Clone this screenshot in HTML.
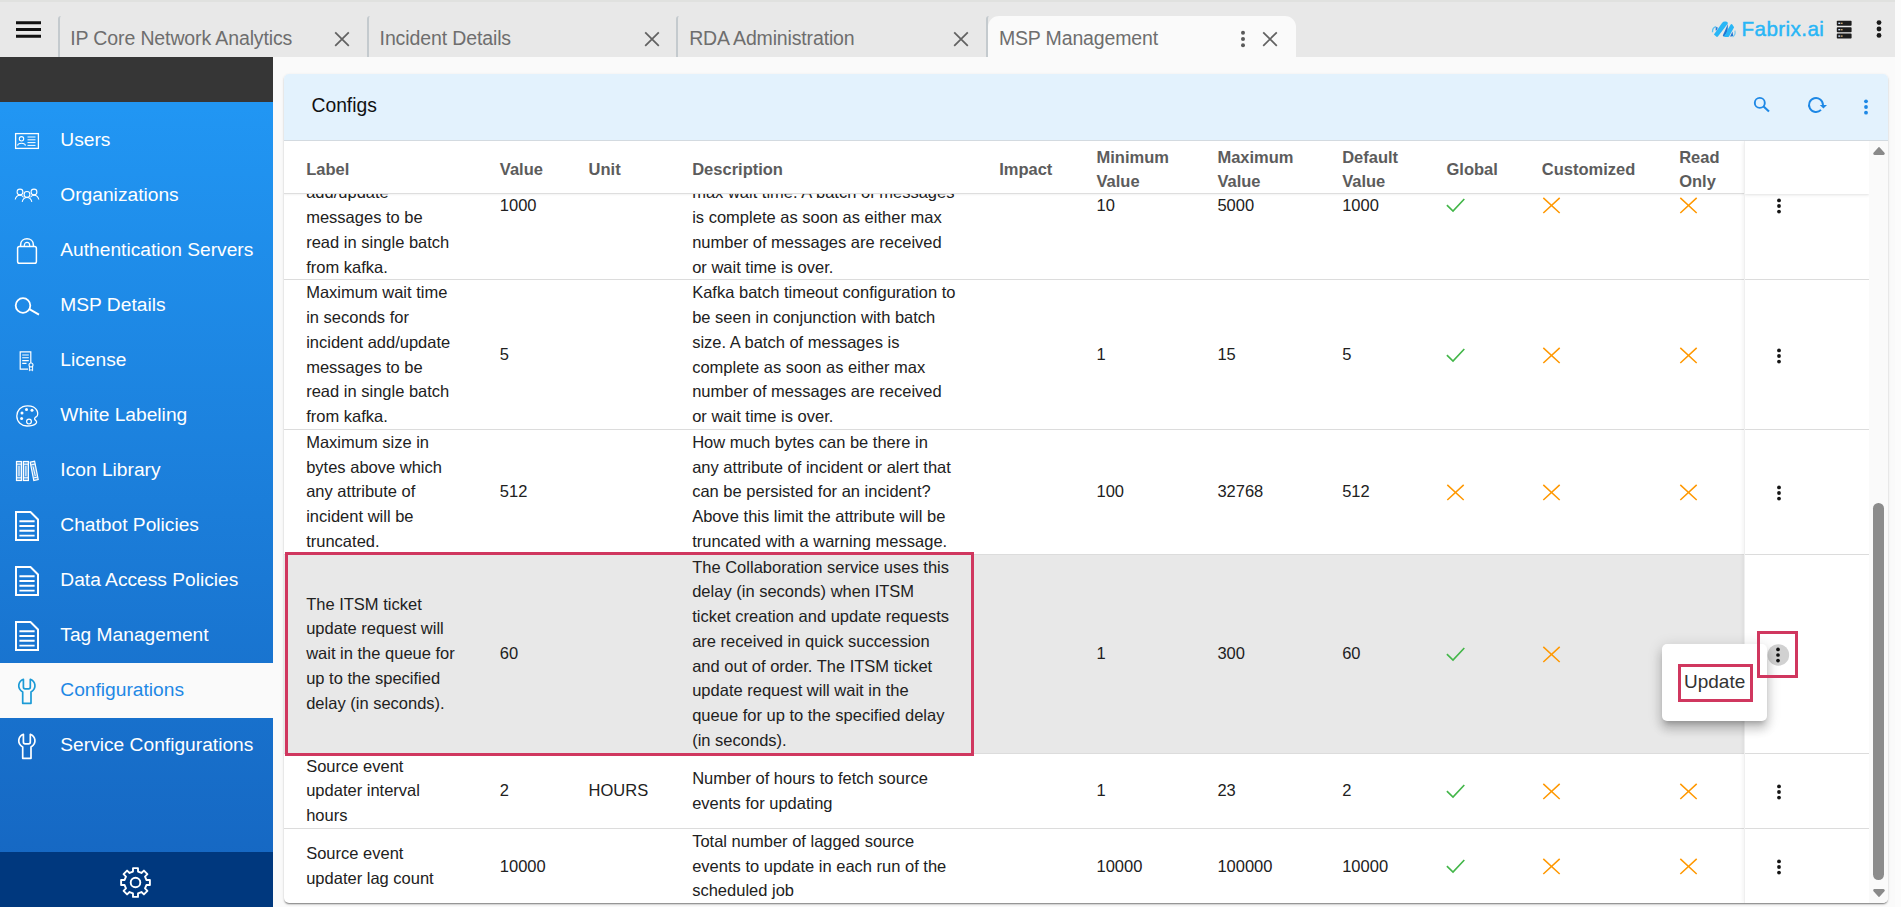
<!DOCTYPE html><html><head><meta charset="utf-8"><title>MSP Management</title><style>
*{box-sizing:border-box;margin:0;padding:0}
html,body{width:1901px;height:907px;overflow:hidden;background:#fafafa;font-family:"Liberation Sans",sans-serif;}
.abs{position:absolute}
#topbar{position:absolute;left:0;top:0;width:1895px;height:57px;background:#e8e8e8}
#topstrip{position:absolute;left:0;top:0;width:1895px;height:2px;background:#e0e1df}
#rstrip{position:absolute;left:1895px;top:0;width:6px;height:907px;background:#fcfcfc}
.tabsep{position:absolute;top:16px;width:12px;height:41px;border-left:2px solid #c4cace;border-top-left-radius:3px}
.tabtxt{position:absolute;top:26px;height:24px;line-height:24px;font-size:19.5px;color:#6e6e6e;white-space:nowrap}
#acttab{position:absolute;left:987.6px;top:16px;width:308px;height:42px;background:#fafafa;border-radius:11px 11px 0 0}
#sidebar{position:absolute;left:0;top:57px;width:273px;height:850px;background:linear-gradient(#2196f3 0%,#2196f3 6%,#1565c0 100%)}
#sbdark{position:absolute;left:0;top:0;width:273px;height:45px;background:#363636}
#sbfoot{position:absolute;left:0;top:795px;width:273px;height:55px;background:#00387e}
.sbi{position:absolute;left:60.3px;height:24px;line-height:24px;font-size:19.2px;color:#fff;white-space:nowrap}
#sbact{position:absolute;left:0;top:606px;width:273px;height:55px;background:#fafafa}
#card{position:absolute;left:284px;top:74px;width:1604px;height:829px;background:#fff;border-radius:5px;box-shadow:0 2px 2px -1px rgba(0,0,0,.34),0 1px 1px 0 rgba(0,0,0,.14),0 1px 3px 0 rgba(0,0,0,.12);overflow:hidden}
#chead{position:absolute;left:0;top:0;width:1604px;height:67px;background:#e3f2fd;border-bottom:1px solid #d3dae0}
#ctitle{position:absolute;left:27.5px;top:20px;font-size:19.3px;line-height:24px;color:#111;white-space:nowrap}
#tbl{position:absolute;left:0;top:0;width:1585px;height:829px;font-size:16.5px;line-height:24.75px;color:#212121}
.row{position:absolute;left:0;width:1585px;border-bottom:1px solid #dcdcdc}
.c{position:absolute;white-space:nowrap}
#thead{position:absolute;left:0;top:66.5px;width:1585px;height:53px;background:#fff;border-bottom:1px solid #dedede;box-shadow:0 1px 1.5px rgba(0,0,0,.05);font-weight:700;color:#5c5c5c;font-size:16.5px;line-height:24.75px}
#actcol{position:absolute;left:1460.6px;top:66.5px;width:124.4px;height:763px;background:transparent;box-shadow:-1px 0 0 0 #efefef,-3px 0 4px -1px rgba(0,0,0,.06)}
.ac{position:absolute;left:1460.6px;top:0;width:124.4px;height:100%;background:#fff}
#sbar{position:absolute;left:1585px;top:66.5px;width:19px;height:763px;background:#fafafa}
</style></head><body>
<div id="topbar"></div><div id="topstrip"></div><div id="rstrip"></div>
<svg class="abs" style="left:15px;top:20px" width="28" height="20" viewBox="0 0 28 20"><path d="M1 2.8H26M1 9.5H26M1 16.3H26" stroke="#111" stroke-width="2.9"/></svg>
<div id="acttab"></div>
<div class="tabsep" style="left:58.3px"></div>
<div class="tabsep" style="left:366.8px"></div>
<div class="tabsep" style="left:675.9px"></div>
<div class="tabsep" style="left:985.6px"></div>
<div class="tabtxt" style="left:70.2px;letter-spacing:-0.12px">IP Core Network Analytics</div>
<div class="tabtxt" style="left:379.6px;letter-spacing:-0.12px">Incident Details</div>
<div class="tabtxt" style="left:689.2px;letter-spacing:-0.15px">RDA Administration</div>
<div class="tabtxt" style="left:998.9px;letter-spacing:-0.15px">MSP Management</div>
<svg class="abs" style="left:333.4px;top:30px" width="18" height="18" viewBox="0 0 18 18"><path d="M2.2 2.4 L15.8 15.8 M15.8 2.4 L2.2 15.8" stroke="#626262" stroke-width="1.75" fill="none"/></svg>
<svg class="abs" style="left:642.6px;top:30px" width="18" height="18" viewBox="0 0 18 18"><path d="M2.2 2.4 L15.8 15.8 M15.8 2.4 L2.2 15.8" stroke="#626262" stroke-width="1.75" fill="none"/></svg>
<svg class="abs" style="left:952.2px;top:30px" width="18" height="18" viewBox="0 0 18 18"><path d="M2.2 2.4 L15.8 15.8 M15.8 2.4 L2.2 15.8" stroke="#626262" stroke-width="1.75" fill="none"/></svg>
<svg class="abs" style="left:1261.4px;top:30px" width="18" height="18" viewBox="0 0 18 18"><path d="M2.2 2.4 L15.8 15.8 M15.8 2.4 L2.2 15.8" stroke="#626262" stroke-width="1.75" fill="none"/></svg>
<svg class="abs" style="left:1238.8px;top:28.700000000000003px" width="8" height="20" viewBox="0 0 8 20"><circle cx="4" cy="3.7" r="2.0" fill="#5a5a5a"/><circle cx="4" cy="10" r="2.0" fill="#5a5a5a"/><circle cx="4" cy="16.3" r="2.0" fill="#5a5a5a"/></svg>
<svg class="abs" style="left:1705px;top:14px" width="40" height="30" viewBox="0 0 40 30"><path d="M7.5 18.2 Q7.3 13.6 11.2 12.7" stroke="#29b6f6" stroke-width="1.3" fill="none" opacity=".75"/><path d="M10.8 12.9 L12.9 13.4 L11.6 16.4 L10.6 16.6 Z" fill="#2a78d4"/><path d="M8.9 20.5 L17 8.9 Q18.4 7.3 20.6 7.6 Q23.4 8.1 22.7 9.8 L12.9 22.5 Q12 23.2 11.2 22.6 Z" fill="#29b6f6"/><path d="M22.9 9.9 L17.8 21.6 Q18.1 22.8 19.4 22.4 L22.6 17.4 Z" fill="#2176d2"/><path d="M18.9 22.4 Q21.6 19.4 22.7 15.6 L25.5 10.8 Q26.4 9.5 27.3 10.6 L29.1 13.3 L23.9 22.7 Q21 23.5 18.9 22.4 Z" fill="#29b6f6"/><path d="M27.5 17.6 L25.1 22.4 Q26.8 22.9 28.1 21.8 Z" fill="#2176d2"/><path d="M29.9 16.6 Q30.9 20.6 27.6 23" stroke="#29b6f6" stroke-width="1.2" fill="none" opacity=".6"/></svg>
<div class="abs" style="left:1741.6px;top:17.4px;font-size:20.6px;line-height:24px;color:#29b6f6;letter-spacing:.42px;white-space:nowrap;-webkit-text-stroke:.45px #29b6f6">Fabrix.ai</div>
<svg class="abs" style="left:1836px;top:20px" width="17" height="20" viewBox="0 0 17 20"><rect x="0.8" y="0.8" width="14.8" height="5" rx="0.8" fill="#1d1d1d"/><rect x="0.8" y="7.2" width="14.8" height="5" rx="0.8" fill="#1d1d1d"/><rect x="0.8" y="13.6" width="14.8" height="5" rx="0.8" fill="#1d1d1d"/><rect x="2.3" y="2.6" width="2" height="1.4" fill="#cfe3ff"/><rect x="5" y="2.6" width="1.6" height="1.4" fill="#c9a36a"/><rect x="2.3" y="9" width="2" height="1.4" fill="#cfe3ff"/><rect x="5" y="9" width="1.6" height="1.4" fill="#c9a36a"/><rect x="2.3" y="15.4" width="2" height="1.4" fill="#cfe3ff"/><rect x="5" y="15.4" width="1.6" height="1.4" fill="#c9a36a"/></svg>
<svg class="abs" style="left:1874.6px;top:18.6px" width="8" height="20" viewBox="0 0 8 20"><circle cx="4" cy="3.5999999999999996" r="2.4" fill="#1a1a1a"/><circle cx="4" cy="10" r="2.4" fill="#1a1a1a"/><circle cx="4" cy="16.4" r="2.4" fill="#1a1a1a"/></svg>
<div id="sidebar"><div id="sbdark"></div><div id="sbact"></div><div id="sbfoot"></div></div>
<div class="sbi" style="top:127.6px;color:#fff">Users</div>
<div class="sbi" style="top:182.6px;color:#fff">Organizations</div>
<div class="sbi" style="top:237.6px;color:#fff">Authentication Servers</div>
<div class="sbi" style="top:292.6px;color:#fff">MSP Details</div>
<div class="sbi" style="top:347.6px;color:#fff">License</div>
<div class="sbi" style="top:402.6px;color:#fff">White Labeling</div>
<div class="sbi" style="top:457.6px;color:#fff">Icon Library</div>
<div class="sbi" style="top:512.6px;color:#fff">Chatbot Policies</div>
<div class="sbi" style="top:567.6px;color:#fff">Data Access Policies</div>
<div class="sbi" style="top:622.6px;color:#fff">Tag Management</div>
<div class="sbi" style="top:677.6px;color:#1e88e5">Configurations</div>
<div class="sbi" style="top:732.6px;color:#fff">Service Configurations</div>
<svg class="abs" style="left:14px;top:132px" width="26" height="18" viewBox="0 0 26 18"><rect x="1.6" y="1.6" width="22.8" height="14.8" stroke="#fff" fill="none" stroke-width="1.3"/><circle cx="7.5" cy="6.8" r="2.2" stroke="#fff" fill="none" stroke-width="1.1"/><path d="M3.6 13.6 C4 10.4 11 10.4 11.4 13.6" stroke="#fff" fill="none" stroke-width="1.1"/><path d="M13.5 5H21.5M13.5 7.8H21.5M13.5 10.6H21.5M13.5 13.4H21.5" stroke="#fff" fill="none" stroke-width="1"/></svg>
<svg class="abs" style="left:14px;top:187px" width="26" height="16" viewBox="0 0 26 16"><circle cx="6" cy="5" r="2.9" stroke="#fff" fill="none" stroke-width="1.1"/><path d="M1.2 12.5 C2 8.6 4 8.2 6 8.2 C8 8.2 9 9 9.6 10.4" stroke="#fff" fill="none" stroke-width="1.1"/><circle cx="20" cy="5" r="2.9" stroke="#fff" fill="none" stroke-width="1.1"/><path d="M24.8 12.5 C24 8.6 22 8.2 20 8.2 C18 8.2 17 9 16.4 10.4" stroke="#fff" fill="none" stroke-width="1.1"/><circle cx="13" cy="7.4" r="2.9" stroke="#fff" fill="none" stroke-width="1.1"/><path d="M8.2 14.8 C9 10.8 11 10.5 13 10.5 C15 10.5 17 10.8 17.8 14.8" stroke="#fff" fill="none" stroke-width="1.1"/></svg>
<svg class="abs" style="left:15px;top:237px" width="24" height="28" viewBox="0 0 24 28"><rect x="2.6" y="9.6" width="18.8" height="16.6" rx="1.8" stroke="#fff" fill="none" stroke-width="1.5"/><path d="M5.6 9.6 V8 C5.6 -0.2 18.4 -0.2 18.4 8 V9.6" stroke="#fff" fill="none" stroke-width="1.5"/><path d="M9.3 9.6 V8.4 C9.3 4.4 14.7 4.4 14.7 8.4 V9.6" stroke="#fff" fill="none" stroke-width="1.2"/></svg>
<svg class="abs" style="left:14px;top:296px" width="27" height="21" viewBox="0 0 27 21"><circle cx="9" cy="9.5" r="7.3" stroke="#fff" fill="none" stroke-width="1.8"/><path d="M15.3 13.2 L25 18.6" stroke="#fff" fill="none" stroke-width="1.9"/></svg>
<svg class="abs" style="left:19px;top:350px" width="16" height="22" viewBox="0 0 16 22"><path d="M11.8 13 V1.8 H1.2 V19.2 H9" stroke="#fff" fill="none" stroke-width="1.2"/><path d="M3.2 5H9.8M3.2 7.8H9.8M3.2 10.6H9.8M3.2 13.4H7.5" stroke="#fff" fill="none" stroke-width="1.1"/><circle cx="12" cy="15" r="2" stroke="#fff" fill="none" stroke-width="1.1"/><path d="M10.4 16.6 V20.8 L12 19.6 L13.6 20.8 V16.6" stroke="#fff" fill="none" stroke-width="1"/></svg>
<svg class="abs" style="left:15px;top:404px" width="25" height="24" viewBox="0 0 25 24"><path d="M12.5 1.8 C5.5 1.8 1.8 7 1.8 12 C1.8 18 6.5 22 12 22 C16.5 22 19.5 21 21 19.5 C22.5 18 21 16.8 20 15.8 C19 14.6 20 13.4 21.5 12.6 C24 11 23.4 1.8 12.5 1.8 Z" stroke="#fff" fill="none" stroke-width="1.3"/><circle cx="7" cy="9" r="1.5" fill="#fff"/><circle cx="11.5" cy="5.6" r="1.5" fill="#fff"/><circle cx="17" cy="6.2" r="1.5" fill="#fff"/><circle cx="6.6" cy="14.6" r="1.5" fill="#fff"/><circle cx="14" cy="17.6" r="2.4" stroke="#fff" fill="none" stroke-width="1.2"/></svg>
<svg class="abs" style="left:15px;top:460px" width="25" height="22" viewBox="0 0 25 22"><rect x="1.5" y="1.5" width="5" height="19" stroke="#fff" fill="rgba(255,255,255,.28)" stroke-width="1.2"/><path d="M1.5 4.2H6.5M1.5 17.8H6.5M4 6V16" stroke="#fff" fill="none" stroke-width="1"/><rect x="8.4" y="1.5" width="5" height="19" stroke="#fff" fill="rgba(255,255,255,.28)" stroke-width="1.2"/><path d="M8.4 4.2H13.4M8.4 17.8H13.4M10.9 6V16" stroke="#fff" fill="none" stroke-width="1"/><path d="M15.2 2.2 L19.6 1.2 L23.2 19.6 L18.8 20.6 Z" stroke="#fff" fill="rgba(255,255,255,.28)" stroke-width="1.2"/><path d="M15.8 5 L20.1 4 M18.2 18 L22.6 17 M18 6.5 L20.3 16" stroke="#fff" fill="none" stroke-width="1"/></svg>
<svg class="abs" style="left:14px;top:510px" width="26" height="32" viewBox="0 0 26 32"><path d="M2 2 H16.5 L24 9.5 V30 H2 Z" stroke="#fff" fill="none" stroke-width="2"/><path d="M5.4 11.2H20.6M5.4 16H20.6M5.4 20.8H20.6M5.4 25.6H20.6" stroke="#fff" fill="none" stroke-width="1.9"/></svg>
<svg class="abs" style="left:14px;top:565px" width="26" height="32" viewBox="0 0 26 32"><path d="M2 2 H16.5 L24 9.5 V30 H2 Z" stroke="#fff" fill="none" stroke-width="2"/><path d="M5.4 11.2H20.6M5.4 16H20.6M5.4 20.8H20.6M5.4 25.6H20.6" stroke="#fff" fill="none" stroke-width="1.9"/></svg>
<svg class="abs" style="left:14px;top:620px" width="26" height="32" viewBox="0 0 26 32"><path d="M2 2 H16.5 L24 9.5 V30 H2 Z" stroke="#fff" fill="none" stroke-width="2"/><path d="M5.4 11.2H20.6M5.4 16H20.6M5.4 20.8H20.6M5.4 25.6H20.6" stroke="#fff" fill="none" stroke-width="1.9"/></svg>
<svg class="abs" style="left:17px;top:677.5px" width="20" height="27" viewBox="0 0 20 27"><path d="M6.4 1.3 C1.4 3.2 -0.6 10.2 5.7 14 V25.3 H14 V14 C20.3 10.2 18.3 3.2 13.3 1.3 V9 Q13.3 10.8 11.6 10.8 H8.1 Q6.4 10.8 6.4 9 Z" stroke="#1b9ad6" stroke-width="1.7" fill="none" stroke-linejoin="round"/></svg>
<svg class="abs" style="left:17px;top:732.5px" width="20" height="27" viewBox="0 0 20 27"><path d="M6.4 1.3 C1.4 3.2 -0.6 10.2 5.7 14 V25.3 H14 V14 C20.3 10.2 18.3 3.2 13.3 1.3 V9 Q13.3 10.8 11.6 10.8 H8.1 Q6.4 10.8 6.4 9 Z" stroke="#fff" stroke-width="1.7" fill="none" stroke-linejoin="round"/></svg>
<svg class="abs" style="left:119px;top:866px" width="34" height="34" viewBox="0 0 34 34"><path d="M13.95 5.59 L14.03 2.11 L18.97 2.11 L19.05 5.59 L22.41 6.98 L24.93 4.58 L28.42 8.07 L26.02 10.59 L27.41 13.95 L30.89 14.03 L30.89 18.97 L27.41 19.05 L26.02 22.41 L28.42 24.93 L24.93 28.42 L22.41 26.02 L19.05 27.41 L18.97 30.89 L14.03 30.89 L13.95 27.41 L10.59 26.02 L8.07 28.42 L4.58 24.93 L6.98 22.41 L5.59 19.05 L2.11 18.97 L2.11 14.03 L5.59 13.95 L6.98 10.59 L4.58 8.07 L8.07 4.58 L10.59 6.98 Z" stroke="#fff" stroke-width="1.9" fill="none" stroke-linejoin="round"/><circle cx="16.5" cy="16.5" r="4.8" stroke="#fff" stroke-width="1.9" fill="none"/></svg>
<div id="card">
<div id="tbl">
<div class="row" style="top:56.75px;height:149.5px;">
<div class="c" style="left:22.19999999999999px;top:0.0px">Maximum number of<br>incident<br>add/update<br>messages to be<br>read in single batch<br>from kafka.</div>
<div class="c" style="left:215.8px;top:61.875px">1000</div>
<div class="c" style="left:408.20000000000005px;top:0.0px">Kafka batch size configuration to<br>be seen in conjunction with batch<br>max wait time. A batch of messages<br>is complete as soon as either max<br>number of messages are received<br>or wait time is over.</div>
<div class="c" style="left:812.5px;top:61.875px">10</div>
<div class="c" style="left:933.4000000000001px;top:61.875px">5000</div>
<div class="c" style="left:1058.2px;top:61.875px">1000</div>
<svg class="abs" style="left:1161.8px;top:66.55px" width="20" height="16" viewBox="0 0 20 16"><path d="M0.9 8.2 L7 14 L18.3 2" stroke="#43b649" stroke-width="1.65" fill="none"/></svg>
<svg class="abs" style="left:1257.7px;top:65.55px" width="19" height="18" viewBox="0 0 19 18"><path d="M1.3 1.9 L17.7 17 M17.7 1.9 L1.3 17" stroke="#ff9800" stroke-width="1.5" fill="none"/></svg>
<svg class="abs" style="left:1395.1000000000001px;top:65.55px" width="19" height="18" viewBox="0 0 19 18"><path d="M1.3 1.9 L17.7 17 M17.7 1.9 L1.3 17" stroke="#ff9800" stroke-width="1.5" fill="none"/></svg>
<div class="ac"></div>
</div>
<div class="row" style="top:206.25px;height:149.5px;">
<div class="c" style="left:22.19999999999999px;top:0.0px">Maximum wait time<br>in seconds for<br>incident add/update<br>messages to be<br>read in single batch<br>from kafka.</div>
<div class="c" style="left:215.8px;top:61.875px">5</div>
<div class="c" style="left:408.20000000000005px;top:0.0px">Kafka batch timeout configuration to<br>be seen in conjunction with batch<br>size. A batch of messages is<br>complete as soon as either max<br>number of messages are received<br>or wait time is over.</div>
<div class="c" style="left:812.5px;top:61.875px">1</div>
<div class="c" style="left:933.4000000000001px;top:61.875px">15</div>
<div class="c" style="left:1058.2px;top:61.875px">5</div>
<svg class="abs" style="left:1161.8px;top:66.55px" width="20" height="16" viewBox="0 0 20 16"><path d="M0.9 8.2 L7 14 L18.3 2" stroke="#43b649" stroke-width="1.65" fill="none"/></svg>
<svg class="abs" style="left:1257.7px;top:65.55px" width="19" height="18" viewBox="0 0 19 18"><path d="M1.3 1.9 L17.7 17 M17.7 1.9 L1.3 17" stroke="#ff9800" stroke-width="1.5" fill="none"/></svg>
<svg class="abs" style="left:1395.1000000000001px;top:65.55px" width="19" height="18" viewBox="0 0 19 18"><path d="M1.3 1.9 L17.7 17 M17.7 1.9 L1.3 17" stroke="#ff9800" stroke-width="1.5" fill="none"/></svg>
<div class="ac"></div>
</div>
<div class="row" style="top:355.75px;height:124.75px;">
<div class="c" style="left:22.19999999999999px;top:0.0px">Maximum size in<br>bytes above which<br>any attribute of<br>incident will be<br>truncated.</div>
<div class="c" style="left:215.8px;top:49.5px">512</div>
<div class="c" style="left:408.20000000000005px;top:0.0px">How much bytes can be there in<br>any attribute of incident or alert that<br>can be persisted for an incident?<br>Above this limit the attribute will be<br>truncated with a warning message.</div>
<div class="c" style="left:812.5px;top:49.5px">100</div>
<div class="c" style="left:933.4000000000001px;top:49.5px">32768</div>
<div class="c" style="left:1058.2px;top:49.5px">512</div>
<svg class="abs" style="left:1162.4px;top:53.175px" width="19" height="18" viewBox="0 0 19 18"><path d="M1.3 1.9 L17.7 17 M17.7 1.9 L1.3 17" stroke="#ff9800" stroke-width="1.5" fill="none"/></svg>
<svg class="abs" style="left:1257.7px;top:53.175px" width="19" height="18" viewBox="0 0 19 18"><path d="M1.3 1.9 L17.7 17 M17.7 1.9 L1.3 17" stroke="#ff9800" stroke-width="1.5" fill="none"/></svg>
<svg class="abs" style="left:1395.1000000000001px;top:53.175px" width="19" height="18" viewBox="0 0 19 18"><path d="M1.3 1.9 L17.7 17 M17.7 1.9 L1.3 17" stroke="#ff9800" stroke-width="1.5" fill="none"/></svg>
<div class="ac"></div>
</div>
<div class="row" style="top:480.5px;height:199.0px;background:#e8e8e8;">
<div class="c" style="left:22.19999999999999px;top:37.125px">The ITSM ticket<br>update request will<br>wait in the queue for<br>up to the specified<br>delay (in seconds).</div>
<div class="c" style="left:215.8px;top:86.625px">60</div>
<div class="c" style="left:408.20000000000005px;top:0.0px">The Collaboration service uses this<br>delay (in seconds) when ITSM<br>ticket creation and update requests<br>are received in quick succession<br>and out of order. The ITSM ticket<br>update request will wait in the<br>queue for up to the specified delay<br>(in seconds).</div>
<div class="c" style="left:812.5px;top:86.625px">1</div>
<div class="c" style="left:933.4000000000001px;top:86.625px">300</div>
<div class="c" style="left:1058.2px;top:86.625px">60</div>
<svg class="abs" style="left:1161.8px;top:91.3px" width="20" height="16" viewBox="0 0 20 16"><path d="M0.9 8.2 L7 14 L18.3 2" stroke="#43b649" stroke-width="1.65" fill="none"/></svg>
<svg class="abs" style="left:1257.7px;top:90.3px" width="19" height="18" viewBox="0 0 19 18"><path d="M1.3 1.9 L17.7 17 M17.7 1.9 L1.3 17" stroke="#ff9800" stroke-width="1.5" fill="none"/></svg>
<div class="ac"></div>
</div>
<div class="row" style="top:679.5px;height:75.25px;">
<div class="c" style="left:22.19999999999999px;top:0.0px">Source event<br>updater interval<br>hours</div>
<div class="c" style="left:215.8px;top:24.75px">2</div>
<div class="c" style="left:304.6px;top:24.75px">HOURS</div>
<div class="c" style="left:408.20000000000005px;top:12.375px">Number of hours to fetch source<br>events for updating</div>
<div class="c" style="left:812.5px;top:24.75px">1</div>
<div class="c" style="left:933.4000000000001px;top:24.75px">23</div>
<div class="c" style="left:1058.2px;top:24.75px">2</div>
<svg class="abs" style="left:1161.8px;top:29.424999999999997px" width="20" height="16" viewBox="0 0 20 16"><path d="M0.9 8.2 L7 14 L18.3 2" stroke="#43b649" stroke-width="1.65" fill="none"/></svg>
<svg class="abs" style="left:1257.7px;top:28.424999999999997px" width="19" height="18" viewBox="0 0 19 18"><path d="M1.3 1.9 L17.7 17 M17.7 1.9 L1.3 17" stroke="#ff9800" stroke-width="1.5" fill="none"/></svg>
<svg class="abs" style="left:1395.1000000000001px;top:28.424999999999997px" width="19" height="18" viewBox="0 0 19 18"><path d="M1.3 1.9 L17.7 17 M17.7 1.9 L1.3 17" stroke="#ff9800" stroke-width="1.5" fill="none"/></svg>
<div class="ac"></div>
</div>
<div class="row" style="top:754.75px;height:75.25px;">
<div class="c" style="left:22.19999999999999px;top:12.375px">Source event<br>updater lag count</div>
<div class="c" style="left:215.8px;top:24.75px">10000</div>
<div class="c" style="left:408.20000000000005px;top:0.0px">Total number of lagged source<br>events to update in each run of the<br>scheduled job</div>
<div class="c" style="left:812.5px;top:24.75px">10000</div>
<div class="c" style="left:933.4000000000001px;top:24.75px">100000</div>
<div class="c" style="left:1058.2px;top:24.75px">10000</div>
<svg class="abs" style="left:1161.8px;top:29.424999999999997px" width="20" height="16" viewBox="0 0 20 16"><path d="M0.9 8.2 L7 14 L18.3 2" stroke="#43b649" stroke-width="1.65" fill="none"/></svg>
<svg class="abs" style="left:1257.7px;top:28.424999999999997px" width="19" height="18" viewBox="0 0 19 18"><path d="M1.3 1.9 L17.7 17 M17.7 1.9 L1.3 17" stroke="#ff9800" stroke-width="1.5" fill="none"/></svg>
<svg class="abs" style="left:1395.1000000000001px;top:28.424999999999997px" width="19" height="18" viewBox="0 0 19 18"><path d="M1.3 1.9 L17.7 17 M17.7 1.9 L1.3 17" stroke="#ff9800" stroke-width="1.5" fill="none"/></svg>
<div class="ac"></div>
</div>
</div>
<svg class="abs" style="left:1490.6px;top:122.0px" width="8" height="20" viewBox="0 0 8 20"><circle cx="4" cy="4.45" r="1.9" fill="#151515"/><circle cx="4" cy="10" r="1.9" fill="#151515"/><circle cx="4" cy="15.55" r="1.9" fill="#151515"/></svg>
<svg class="abs" style="left:1490.6px;top:271.5px" width="8" height="20" viewBox="0 0 8 20"><circle cx="4" cy="4.45" r="1.9" fill="#151515"/><circle cx="4" cy="10" r="1.9" fill="#151515"/><circle cx="4" cy="15.55" r="1.9" fill="#151515"/></svg>
<svg class="abs" style="left:1490.6px;top:408.625px" width="8" height="20" viewBox="0 0 8 20"><circle cx="4" cy="4.45" r="1.9" fill="#151515"/><circle cx="4" cy="10" r="1.9" fill="#151515"/><circle cx="4" cy="15.55" r="1.9" fill="#151515"/></svg>
<svg class="abs" style="left:1482px;top:568px" width="26" height="26" viewBox="0 0 26 26"><circle cx="12.35" cy="12.95" r="10.8" fill="#d1d1d1"/></svg>
<svg class="abs" style="left:1490.3px;top:570.8px" width="8" height="20" viewBox="0 0 8 20"><circle cx="4" cy="4.45" r="1.85" fill="#111"/><circle cx="4" cy="10" r="1.85" fill="#111"/><circle cx="4" cy="15.55" r="1.85" fill="#111"/></svg>
<svg class="abs" style="left:1490.6px;top:707.625px" width="8" height="20" viewBox="0 0 8 20"><circle cx="4" cy="4.45" r="1.9" fill="#151515"/><circle cx="4" cy="10" r="1.9" fill="#151515"/><circle cx="4" cy="15.55" r="1.9" fill="#151515"/></svg>
<svg class="abs" style="left:1490.6px;top:782.875px" width="8" height="20" viewBox="0 0 8 20"><circle cx="4" cy="4.45" r="1.9" fill="#151515"/><circle cx="4" cy="10" r="1.9" fill="#151515"/><circle cx="4" cy="15.55" r="1.9" fill="#151515"/></svg>
<div id="thead">
<div class="c" style="left:22.19999999999999px;top:16.5px">Label</div>
<div class="c" style="left:215.8px;top:16.5px">Value</div>
<div class="c" style="left:304.6px;top:16.5px">Unit</div>
<div class="c" style="left:408.20000000000005px;top:16.5px">Description</div>
<div class="c" style="left:715.2px;top:16.5px">Impact</div>
<div class="c" style="left:812.5px;top:4.0px">Minimum<br>Value</div>
<div class="c" style="left:933.4000000000001px;top:4.0px">Maximum<br>Value</div>
<div class="c" style="left:1058.2px;top:4.0px">Default<br>Value</div>
<div class="c" style="left:1162.5px;top:16.5px">Global</div>
<div class="c" style="left:1257.8px;top:16.5px">Customized</div>
<div class="c" style="left:1395.2px;top:4.0px">Read<br>Only</div>
</div>
<div class="abs" style="left:1460.6px;top:66.5px;width:124.4px;height:53.5px;background:#fff;box-shadow:0 2px 3px rgba(0,0,0,.05)"></div>
<div id="actcol"></div>
<div id="sbar"></div>
<svg class="abs" style="left:1587px;top:71px" width="16" height="12" viewBox="0 0 16 12"><path d="M8 3.5 L12.5 8.6 H3.5 Z" fill="#8a8a8a" stroke="#8a8a8a" stroke-width="2.6" stroke-linejoin="round"/></svg>
<svg class="abs" style="left:1587px;top:813px" width="16" height="12" viewBox="0 0 16 12"><path d="M8 8.5 L12.5 3.4 H3.5 Z" fill="#8a8a8a" stroke="#8a8a8a" stroke-width="2.6" stroke-linejoin="round"/></svg>
<div class="abs" style="left:1589.2px;top:429px;width:10.8px;height:377px;border-radius:5.4px;background:#8c8c8c"></div>
<div id="chead"><div id="ctitle">Configs</div>
<svg class="abs" style="left:1466px;top:20px" width="22" height="22" viewBox="0 0 22 22"><circle cx="9.8" cy="8.9" r="5" stroke="#1e88e5" stroke-width="1.9" fill="none"/><path d="M13.6 12.6 L19 17.6" stroke="#1e88e5" stroke-width="2.1"/></svg>
<svg class="abs" style="left:1521px;top:20px" width="24" height="22" viewBox="0 0 24 22"><path d="M18 11 A7 7 0 1 0 16 15.9" stroke="#1e88e5" stroke-width="1.9" fill="none"/><path d="M14.8 10.9 H22 L18.4 14.6 Z" fill="#1e88e5"/></svg>
<svg class="abs" style="left:1578.2px;top:22.599999999999994px" width="8" height="20" viewBox="0 0 8 20"><circle cx="4" cy="4.3" r="1.9" fill="#1e88e5"/><circle cx="4" cy="10" r="1.9" fill="#1e88e5"/><circle cx="4" cy="15.7" r="1.9" fill="#1e88e5"/></svg>
</div>
</div>
<div class="abs" style="left:285px;top:552px;width:688.5px;height:204px;border:3px solid #d0375f"></div>
<div class="abs" style="left:1662px;top:644px;width:105px;height:76.5px;background:#fff;border-radius:5px;box-shadow:0 5px 5px -3px rgba(0,0,0,.2),0 8px 10px 1px rgba(0,0,0,.14),0 3px 14px 2px rgba(0,0,0,.12)"></div>
<div class="abs" style="left:1684px;top:669.5px;font-size:19px;line-height:24px;color:#333;white-space:nowrap">Update</div>
<div class="abs" style="left:1678px;top:664px;width:75px;height:38px;border:3px solid #d0375f"></div>
<div class="abs" style="left:1757px;top:631px;width:41px;height:46.5px;border:3px solid #d0375f"></div>
</body></html>
